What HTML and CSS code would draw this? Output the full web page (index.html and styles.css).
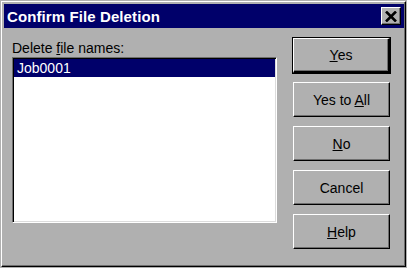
FILE: index.html
```html
<!DOCTYPE html>
<html lang="en">
<head>
  <meta charset="UTF-8">
  <title>Confirm File Deletion</title>
  <link rel="stylesheet" href="styles.css">
</head>
<body>
  <div class="janela">
    <div class="titulo">
      <span>Confirm File Deletion</span>
      <button class="fechar">
        <svg width="12" height="11" viewBox="0 0 12 11"><path d="M1 0.5 L11 10.5 M11 0.5 L1 10.5" stroke="#000" stroke-width="2.6"/></svg>
      </button>
    </div>
    <div class="conteudo">
      <div class="lista-area">
        <label>Delete <u>f</u>ile names:</label>
        <div class="lista">
          <div class="item selecionado">Job0001</div>
        </div>
      </div>
      <div class="botoes">
        <button class="botao padrao"><u>Y</u>es</button>
        <button class="botao">Yes to <u>A</u>ll</button>
        <button class="botao"><u>N</u>o</button>
        <button class="botao">Cancel</button>
        <button class="botao"><u>H</u>elp</button>
      </div>
    </div>
  </div>
</body>
</html>
```

FILE: styles.css
```css
body {
  margin: 0;
  background-color: #b0b0b0;
  font-family: "Liberation Sans", Arial, sans-serif;
  font-size: 14px;
}
.janela {
  box-sizing: border-box;
  width: 405px;
  height: 266px;
  margin: 1px 0 0 1px;
  padding: 2px 1px 2px 2px;
  border-left: 1px solid #fff;
  border-top: 1px solid #fff;
  border-right: 1px solid #000;
  border-bottom: 1px solid #000;
  box-shadow: inset -1px -1px #6e6e6e;
}
.titulo {
  height: 24px;
  background-color: #00006a;
  color: white;
  font-weight: bold;
  font-size: 15px;
  letter-spacing: 0.1px;
  display: flex;
  align-items: center;
  justify-content: space-between;
  padding: 0 3px 0 3px;
}
.fechar {
  width: 20px;
  height: 18px;
  padding: 0;
  background-color: #b0b0b0;
  border-left: 1px solid #fff;
  border-top: 1px solid #fff;
  border-right: 1px solid #000;
  border-bottom: 1px solid #000;
  box-shadow: inset -1px -1px #6e6e6e;
  display: flex;
  align-items: center;
  justify-content: center;
}
.conteudo {
  display: flex;
  gap: 16px;
  padding: 10px 11px 0 8px;
}
.lista-area {
  width: 265px;
  padding-top: 2px;
}
.lista-area label {
  display: block;
  line-height: 16px;
  margin-bottom: 1px;
}
.lista {
  box-sizing: border-box;
  height: 166px;
  background-color: white;
  border-left: 1px solid #6e6e6e;
  border-top: 1px solid #6e6e6e;
  border-right: 1px solid #fff;
  border-bottom: 1px solid #fff;
  box-shadow: inset 1px 1px #000, inset -1px -1px #dcdcdc;
  padding: 1px;
}
.item {
  height: 18px;
  line-height: 18px;
  padding-left: 3px;
}
.selecionado {
  background-color: #00006a;
  color: white;
}
.botoes {
  display: flex;
  flex-direction: column;
  gap: 9px;
}
.botao {
  box-sizing: border-box;
  width: 97px;
  height: 35px;
  padding: 0;
  font-family: "Liberation Sans", Arial, sans-serif;
  font-size: 14px;
  color: black;
  background-color: #b0b0b0;
  border-left: 1px solid #fff;
  border-top: 1px solid #fff;
  border-right: 1px solid #000;
  border-bottom: 1px solid #000;
  box-shadow: inset -1px -1px #6e6e6e;
}
.padrao {
  outline: 1px solid #000;
  border-right-width: 2px;
  border-bottom-width: 2px;
}
```
